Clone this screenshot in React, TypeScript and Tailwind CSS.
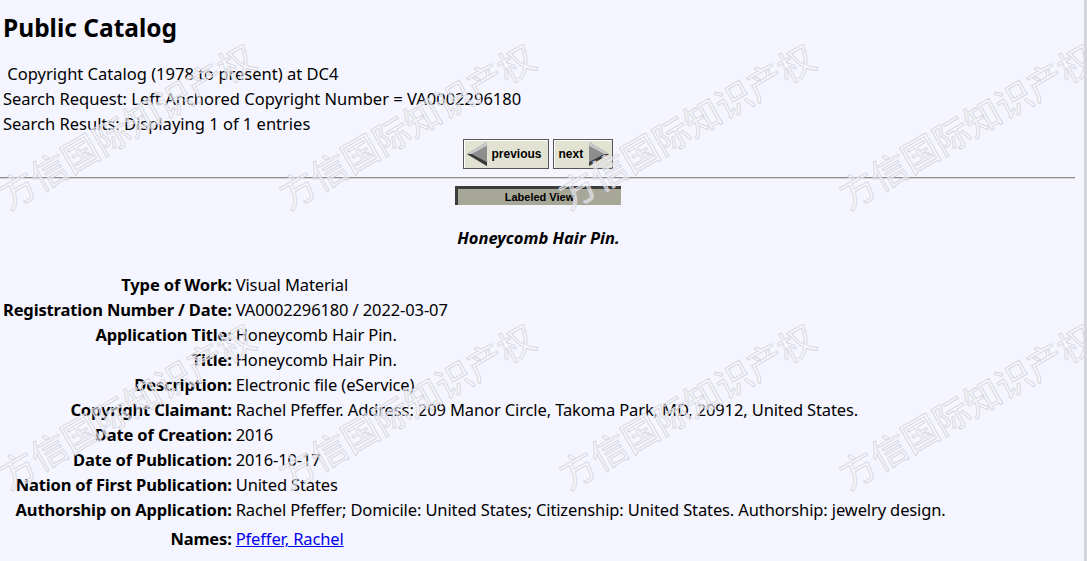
import type { ReactNode } from "react";

const rows: [string, ReactNode][] = [
  ["Type of Work:", "Visual Material"],
  ["Registration Number / Date:", "VA0002296180 / 2022-03-07"],
  ["Application Title:", "Honeycomb Hair Pin."],
  ["Title:", "Honeycomb Hair Pin."],
  ["Description:", "Electronic file (eService)"],
  [
    "Copyright Claimant:",
    "Rachel Pfeffer. Address: 209 Manor Circle, Takoma Park, MD, 20912, United States.",
  ],
  ["Date of Creation:", "2016"],
  ["Date of Publication:", "2016-10-17"],
  ["Nation of First Publication:", "United States"],
  [
    "Authorship on Application:",
    "Rachel Pfeffer; Domicile: United States; Citizenship: United States. Authorship: jewelry design.",
  ],
];

// watermark anchors (bottom-left of the first glyph)
const marks = [
  [10, 212],
  [290, 212],
  [570, 212],
  [850, 212],
  [10, 492],
  [290, 492],
  [570, 492],
  [850, 492],
];

function Arrow({ dir }: { dir: "left" | "right" }) {
  const flip = dir === "right" ? "scale(-1,1) translate(-22,0)" : undefined;
  return (
    <svg width="22" height="26" viewBox="0 0 22 26">
      <g transform={flip}>
        <polygon points="21,1 1,13 21,25" fill="#7a7a7a" />
        <polygon points="21,1 1,13 6,13 21,5" fill="#c8c8c8" />
        <polygon points="1,13 21,25 21,21 6,13" fill="#3a3a3a" />
        <polygon points="21,5 6,13 21,21" fill="#8e8e8e" />
      </g>
    </svg>
  );
}

function NavButton({ label, dir, w }: { label: string; dir: "left" | "right"; w: string }) {
  return (
    <div
      className={`flex h-[30px] items-center justify-between border border-[#555] bg-[#e2e2d2] px-[2px] shadow-[inset_1px_1px_0_#fff] ${w}`}
    >
      {dir === "left" ? <Arrow dir="left" /> : null}
      <span className="pr-[4px] pl-[3px] font-['Liberation_Sans',Arial,sans-serif] text-[12px] font-bold text-black">
        {label}
      </span>
      {dir === "right" ? <Arrow dir="right" /> : null}
    </div>
  );
}

export default function App() {
  return (
    <div className="relative h-[561px] w-[1087px] overflow-hidden border-r-[3px] border-[#d4d4dc] bg-[#f5f5ff] font-['Noto_Sans',sans-serif] text-[16.5px] text-black">
      <div className="px-[3px]">
        <h1 className="pt-[10px] text-[24.5px] leading-[36px] font-bold">Public Catalog</h1>
        <div className="mt-[15px] leading-[25px]">
          <div>&nbsp;Copyright Catalog (1978 to present) at DC4</div>
          <div>Search Request: Left Anchored Copyright Number = VA0002296180</div>
          <div>Search Results: Displaying 1 of 1 entries</div>
        </div>
        <div className="mt-[3px] flex justify-center gap-[4px] pr-[9px]">
          <NavButton label="previous" dir="left" w="w-[86px]" />
          <NavButton label="next" dir="right" w="w-[60px]" />
        </div>
      </div>
      <div className="mt-[8px] mr-[9px] h-[2px] border-t border-[#8c8c8c] bg-[#d8d8d8]" />
      <div className="mt-[7px] flex justify-center pr-[8px]">
        <div className="flex h-[19px] w-[166px] items-center justify-center border-t-[3px] border-l-[3px] border-[#3c3c3c] bg-[#a7a797] font-['Liberation_Sans',Arial,sans-serif] text-[11px] font-bold text-black">
          Labeled View
        </div>
      </div>
      <div className="mt-[20px] pr-[7px] text-center leading-[25px] font-bold italic">
        Honeycomb Hair Pin.
      </div>
      <div className="mt-[22px] grid grid-cols-[auto_1fr] gap-x-[4px] pl-[3px] leading-[25px]">
        {rows.map(([k, v]) => (
          <div key={k} className="contents">
            <div className="text-right font-bold tracking-[-0.15px]">{k}</div>
            <div className="tracking-[-0.12px]">{v}</div>
          </div>
        ))}
        <div className="mt-[4px] text-right font-bold tracking-[-0.15px]">Names:</div>
        <div className="mt-[4px] tracking-[-0.12px]">
          <a href="#" className="text-[#0000ee] underline">
            Pfeffer, Rachel
          </a>
        </div>
      </div>
      <div className="pointer-events-none absolute inset-0">
        {marks.map(([x, y]) => (
          <span
            key={`${x}-${y}`}
            className="absolute origin-bottom-left -rotate-30 font-['Noto_Sans_CJK_SC',sans-serif] text-[36px] leading-[36px] whitespace-nowrap text-white/50 [-webkit-text-stroke:1px_#d8d8e0]"
            style={{ left: x, top: y - 36 }}
          >
            方信国际知识产权
          </span>
        ))}
      </div>
    </div>
  );
}
